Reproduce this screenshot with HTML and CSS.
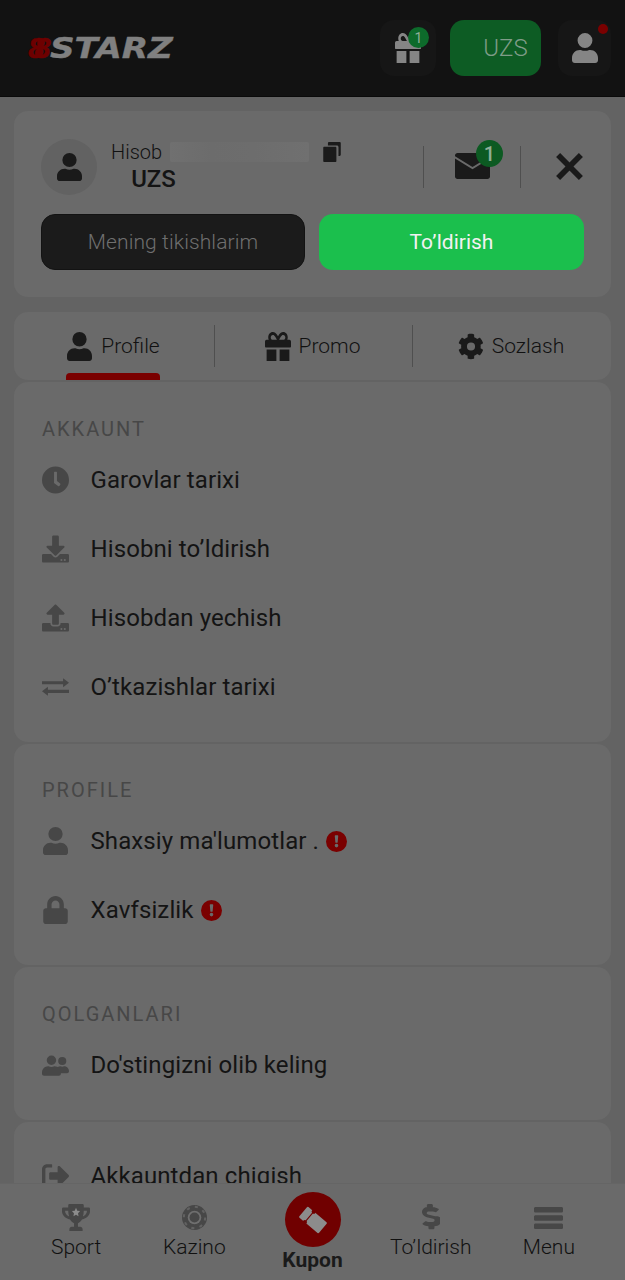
FILE: index.html
```html
<!DOCTYPE html>
<html lang="en">

<head>
    <meta charset="UTF-8" />
    <meta name="viewport" content="width=device-width, initial-scale=1.0" />
    <title>8Starz</title>
    <link rel="stylesheet" href="styles.css">
</head>

<body>
    <svg class="defs">
        <symbol id="i-user" viewBox="0 0 448 512" preserveAspectRatio="none"><path d="M224 256a128 128 0 1 0 0-256 128 128 0 0 0 0 256zm90 32h-17a174 174 0 0 1-146 0h-17C60 288 0 348 0 422v42c0 27 21 48 48 48h352c27 0 48-21 48-48v-42c0-74-60-134-134-134z"/></symbol>
        <symbol id="i-gift" viewBox="0 30 512 482" preserveAspectRatio="none"><path d="M32 512c0 0 14 0 32 0h160V320H32v192zm256 0h160c18 0 32 0 32 0V320H288v192zm192-352h-42c6-12 10-25 10-40 0-48-40-88-88-88-42 0-69 21-104 69-35-48-62-69-104-69-48 0-88 40-88 88 0 15 3 28 10 40H32c-18 0-32 14-32 32v80c0 9 7 16 16 16h480c9 0 16-7 16-16v-80c0-18-14-32-32-32zm-327 0c-22 0-40-18-40-40s18-40 40-40c20 0 35 3 82 80h-82zm207 0h-82c47-77 61-80 82-80 22 0 40 18 40 40s-18 40-40 40z"/></symbol>
        <symbol id="i-cog" viewBox="0 0 512 512"><path d="M487 316l-43-25c4-23 4-47 0-70l43-25c5-3 7-9 5-14-11-36-30-68-55-95-4-4-10-5-15-2l-43 25c-18-15-39-27-61-35V25c0-6-4-11-9-12-37-8-75-8-110 0-5 1-9 6-9 12v50c-22 8-43 20-61 35L86 85c-5-3-11-2-15 2-25 27-44 59-55 95-2 5 0 11 5 14l43 25c-4 23-4 47 0 70l-43 25c-5 3-7 9-5 14 11 36 30 68 55 95 4 4 10 5 15 2l43-25c18 15 39 27 61 35v50c0 6 4 11 9 12 37 8 75 8 110 0 5-1 9-6 9-12v-50c22-8 43-20 61-35l43 25c5 3 11 2 15-2 25-27 44-59 55-95 2-5 0-11-5-14zM256 336a80 80 0 1 1 0-160 80 80 0 0 1 0 160z"/></symbol>
        <symbol id="i-mail" viewBox="0 0 512 400" preserveAspectRatio="none"><path d="M0 38C0 17 17 0 38 0h436c21 0 38 17 38 38v12L256 215 0 50V38zm0 48v276c0 21 17 38 38 38h436c21 0 38-17 38-38V86L256 250 0 86z"/></symbol>
        <symbol id="i-copy" viewBox="0 0 448 512"><path d="M150 0h270c15 0 28 13 28 28v300c0 15-13 28-28 28h-30V130c0-22-18-40-40-40H120V30c0-15 13-30 30-30z"/><path d="M28 120h280c15 0 28 13 28 28v336c0 15-13 28-28 28H28c-15 0-28-13-28-28V148c0-15 13-28 28-28z"/></symbol>
        <symbol id="i-clock" viewBox="0 0 512 512"><path d="M256 0a256 256 0 1 0 0 512 256 256 0 0 0 0-512zm91 344-19 26c-4 6-11 7-17 3l-78-57c-3-2-5-6-5-10V112c0-7 5-12 12-12h32c7 0 12 5 12 12v165l60 45c5 4 7 12 3 17v5z"/></symbol>
        <symbol id="i-down" viewBox="0 0 512 512"><path d="M216 0h80c13 0 24 11 24 24v168h88c18 0 27 21 14 34L269 379c-7 7-19 7-26 0L90 226c-13-13-4-34 14-34h88V24c0-13 11-24 24-24zm296 376v112c0 13-11 24-24 24H24c-13 0-24-11-24-24V376c0-13 11-24 24-24h147l49 49c20 20 52 20 72 0l49-49h147c13 0 24 11 24 24zm-124 88a20 20 0 1 0-40 0 20 20 0 0 0 40 0zm64 0a20 20 0 1 0-40 0 20 20 0 0 0 40 0z"/></symbol>
        <symbol id="i-up" viewBox="0 0 512 512"><path d="M296 384h-80c-13 0-24-11-24-24V192h-88c-18 0-27-21-14-34L243 5c7-7 19-7 26 0l153 153c13 13 4 34-14 34h-88v168c0 13-11 24-24 24zm216-8v112c0 13-11 24-24 24H24c-13 0-24-11-24-24V376c0-13 11-24 24-24h136v8c0 31 25 56 56 56h80c31 0 56-25 56-56v-8h136c13 0 24 11 24 24zm-124 88a20 20 0 1 0-40 0 20 20 0 0 0 40 0zm64 0a20 20 0 1 0-40 0 20 20 0 0 0 40 0z"/></symbol>
        <symbol id="i-swap" viewBox="0 0 512 380"><path d="M0 80h400V24l112 86-112 86v-56H0z"/><path d="M512 242H112v-56L0 272l112 86v-56h400z"/></symbol>
        <symbol id="i-lock" viewBox="0 0 448 512"><path d="M400 224h-24v-72C376 68 308 0 224 0S72 68 72 152v72H48c-26 0-48 22-48 48v192c0 26 22 48 48 48h352c26 0 48-22 48-48V272c0-26-22-48-48-48zm-104 0H152v-72c0-40 32-72 72-72s72 32 72 72v72z"/></symbol>
        <symbol id="i-alert" viewBox="0 0 512 512"><path d="M256 0a256 256 0 1 0 0 512 256 256 0 0 0 0-512zm0 400a44 44 0 1 1 0-88 44 44 0 0 1 0 88zm42-280-14 152c-1 8-7 14-15 14h-26c-8 0-14-6-15-14l-14-152c-1-9 6-16 15-16h54c9 0 16 7 15 16z"/></symbol>
        <symbol id="i-users" viewBox="0 0 640 512"><path d="M224 256a112 112 0 1 0 0-224 112 112 0 0 0 0 224zm77 32h-9a157 157 0 0 1-136 0h-9C66 288 0 354 0 435v29c0 26 22 48 48 48h352c26 0 48-22 48-48v-29c0-81-66-147-147-147zm179-32a96 96 0 1 0 0-192 96 96 0 0 0 0 192zm48 32h-4a126 126 0 0 1-88 0h-4c-20 0-39 6-56 16 25 27 40 62 40 101v38c0 2 0 5-1 7h177c26 0 48-22 48-48 0-62-50-114-112-114z"/></symbol>
        <symbol id="i-exit" viewBox="0 0 512 448"><path d="M505 207 337 39c-15-15-41-4-41 17v96H160c-13 0-24 11-24 24v96c0 13 11 24 24 24h136v96c0 21 26 32 41 17l168-168c9-9 9-25 0-34zM192 436v-40c0-7-5-12-12-12H96c-18 0-32-14-32-32V96c0-18 14-32 32-32h84c7 0 12-5 12-12V12c0-7-5-12-12-12H96C43 0 0 43 0 96v256c0 53 43 96 96 96h84c7 0 12-5 12-12z"/></symbol>
        <symbol id="i-trophy" viewBox="0 0 576 512" preserveAspectRatio="none"><path d="M552 64H448V24c0-13-11-24-24-24H152c-13 0-24 11-24 24v40H24C11 64 0 75 0 88v56c0 66 70 134 166 151 25 40 60 62 82 69v68h-48c-27 0-48 21-48 48v32h272v-32c0-27-21-48-48-48h-48v-68c22-7 57-29 82-69 96-17 166-85 166-151V88c0-13-11-24-24-24zM64 144v-16h64c1 43 8 79 19 110-50-18-83-62-83-94zm448 0c0 32-33 76-83 94 11-31 18-67 19-110h64v16z"/><path fill="#8c8c8c" d="m288 72 26 54 58 8-42 41 10 58-52-27-52 27 10-58-42-41 58-8z"/></symbol>
        <symbol id="i-chip" viewBox="0 0 48 48">
            <circle cx="24" cy="24" r="24"/>
            <circle cx="24" cy="24" r="20.5" fill="none" stroke="#626262" stroke-width="4" stroke-dasharray="6 10.1"/>
            <circle cx="24" cy="24" r="13" fill="#6f6f6f"/>
            <circle cx="24" cy="24" r="9.5"/>
        </symbol>
        <symbol id="i-dollar" viewBox="0 0 288 512" preserveAspectRatio="none"><path d="M209 233 97 200c-13-4-22-16-22-29 0-17 14-30 30-30h69c13 0 25 4 35 11 6 4 14 3 19-2l36-35c7-7 6-18-2-24-25-19-56-30-88-30V24c0-13-11-24-24-24h-48c-13 0-24 11-24 24v37h-4C37 61-8 109 1 166c6 41 37 73 76 85l103 30c13 4 22 16 22 29 0 17-14 30-30 30h-69c-13 0-25-4-35-11-6-4-14-3-19 2l-36 35c-7 7-6 18 2 24 25 19 56 30 88 30v37c0 13 11 24 24 24h48c13 0 24-11 24-24v-37c47-1 91-29 106-74 21-64-17-127-96-113z"/></symbol>
        <symbol id="i-bars" viewBox="0 0 448 400" preserveAspectRatio="none"><path d="M24 0h400c13 0 24 11 24 24v52c0 13-11 24-24 24H24C11 100 0 89 0 76V24C0 11 11 0 24 0zm0 150h400c13 0 24 11 24 24v52c0 13-11 24-24 24H24c-13 0-24-11-24-24v-52c0-13 11-24 24-24zm0 150h400c13 0 24 11 24 24v52c0 13-11 24-24 24H24c-13 0-24-11-24-24v-52c0-13 11-24 24-24z"/></symbol>
    </svg>

    <header class="topbar">
        <div class="logo"><span class="logo-num">88</span>STARZ</div>
        <div class="top-actions">
            <button class="top-btn">
                <svg class="top-icon"><use href="#i-gift"/></svg>
                <span class="count top-count">1</span>
            </button>
            <button class="top-balance">UZS</button>
            <button class="top-btn top-user">
                <svg class="top-icon"><use href="#i-user"/></svg>
                <span class="dot"></span>
            </button>
        </div>
    </header>

    <main class="content">
        <section class="card account">
            <div class="account-row">
                <div class="avatar"><svg class="avatar-icon"><use href="#i-user"/></svg></div>
                <div class="account-info">
                    <div class="account-line">
                        <span class="account-label">Hisob</span>
                        <span class="account-hidden"></span>
                        <svg class="copy-icon"><use href="#i-copy"/></svg>
                    </div>
                    <div class="account-currency">UZS</div>
                </div>
                <div class="account-tools">
                    <div class="mail">
                        <svg class="mail-icon"><use href="#i-mail"/></svg>
                        <span class="count mail-count">1</span>
                    </div>
                    <div class="close">
                        <svg class="close-icon" viewBox="0 0 28 28"><path d="M3 3l22 22M25 3L3 25"/></svg>
                    </div>
                </div>
            </div>
            <div class="account-buttons">
                <button class="btn btn-dark">Mening tikishlarim</button>
                <button class="btn btn-green">To’ldirish</button>
            </div>
        </section>

        <nav class="card tabs">
            <div class="tab active"><svg class="tab-icon"><use href="#i-user"/></svg>Profile</div>
            <div class="tab"><svg class="tab-icon"><use href="#i-gift"/></svg>Promo</div>
            <div class="tab"><svg class="tab-icon"><use href="#i-cog"/></svg>Sozlash</div>
        </nav>

        <section class="card menu">
            <h2 class="menu-title">AKKAUNT</h2>
            <a class="menu-row"><svg class="menu-icon"><use href="#i-clock"/></svg>Garovlar tarixi</a>
            <a class="menu-row"><svg class="menu-icon"><use href="#i-down"/></svg>Hisobni to’ldirish</a>
            <a class="menu-row"><svg class="menu-icon"><use href="#i-up"/></svg>Hisobdan yechish</a>
            <a class="menu-row"><svg class="menu-icon"><use href="#i-swap"/></svg>O’tkazishlar tarixi</a>
        </section>

        <section class="card menu">
            <h2 class="menu-title">PROFILE</h2>
            <a class="menu-row"><svg class="menu-icon menu-icon-user"><use href="#i-user"/></svg>Shaxsiy ma'lumotlar .<svg class="alert-icon"><use href="#i-alert"/></svg></a>
            <a class="menu-row"><svg class="menu-icon"><use href="#i-lock"/></svg>Xavfsizlik<svg class="alert-icon"><use href="#i-alert"/></svg></a>
        </section>

        <section class="card menu">
            <h2 class="menu-title">QOLGANLARI</h2>
            <a class="menu-row"><svg class="menu-icon"><use href="#i-users"/></svg>Do'stingizni olib keling</a>
        </section>

        <section class="card menu menu-last">
            <a class="menu-row"><svg class="menu-icon"><use href="#i-exit"/></svg>Akkauntdan chiqish</a>
        </section>
    </main>

    <footer class="bottombar">
        <div class="nav-item"><svg class="nav-icon nav-trophy"><use href="#i-trophy"/></svg>Sport</div>
        <div class="nav-item"><svg class="nav-icon nav-chip"><use href="#i-chip"/></svg>Kazino</div>
        <div class="nav-item nav-kupon">
            <span class="kupon-circle">
                <svg class="kupon-icon" viewBox="0 0 28 28">
                    <g transform="rotate(40 14 14)">
                        <rect x="2" y="7.5" width="7" height="13" rx="1"/>
                        <rect x="10" y="7.5" width="16" height="13" rx="1"/>
                        <circle cx="9.5" cy="7.5" r="2" class="kupon-notch"/>
                        <circle cx="9.5" cy="20.5" r="2" class="kupon-notch"/>
                    </g>
                </svg>
            </span>
            Kupon
        </div>
        <div class="nav-item"><svg class="nav-icon nav-dollar"><use href="#i-dollar"/></svg>To’ldirish</div>
        <div class="nav-item"><svg class="nav-icon nav-bars"><use href="#i-bars"/></svg>Menu</div>
    </footer>
</body>

</html>
```

FILE: styles.css
```css
* {
    box-sizing: border-box;
}

html,
body {
    margin: 0;
    height: 1280px;
    overflow: hidden;
}

body {
    background-color: #636363;
    color: #141414;
    font-family: Roboto, sans-serif;
}

button {
    border: none;
    font-family: inherit;
}

.defs {
    display: none;
}

.topbar {
    display: flex;
    align-items: center;
    justify-content: space-between;
    height: 97px;
    padding: 0 14px 0 28px;
    background-color: #121212;
    border-bottom: 1px solid #0a0a0a;
}

.logo {
    font-family: "DejaVu Sans", sans-serif;
    font-size: 29px;
    font-weight: 700;
    font-style: italic;
    color: #808080;
    -webkit-text-stroke: 0.4px #808080;
    transform: scaleX(1.18);
    transform-origin: left center;
}

.logo-num {
    display: inline-block;
    margin-right: 5px;
    font-size: 27px;
    letter-spacing: -12px;
    color: #6e0000;
    -webkit-text-stroke: 0.4px #6e0000;
    transform: scaleX(0.78);
    transform-origin: left center;
}

.top-actions {
    display: flex;
    align-items: center;
}

.top-btn {
    position: relative;
    display: flex;
    align-items: center;
    justify-content: center;
    width: 56px;
    height: 56px;
    border-radius: 14px;
    background-color: #161616;
}

.top-user {
    width: 53px;
    margin-left: 17px;
}

.top-icon {
    width: 26px;
    height: 30px;
    fill: #858585;
}

.top-balance {
    width: 91px;
    height: 56px;
    margin-left: 14px;
    padding-left: 26px;
    border-radius: 14px;
    background-color: #0d5c24;
    color: #7f9c88;
    font-size: 24px;
    font-weight: 300;
}

.count {
    position: absolute;
    display: flex;
    align-items: center;
    justify-content: center;
    border-radius: 50%;
    background-color: #0d6b2b;
    color: #8fae98;
}

.top-count {
    top: 7px;
    right: 7px;
    width: 21px;
    height: 21px;
    font-size: 14px;
}

.dot {
    position: absolute;
    top: 4px;
    right: 3px;
    width: 10px;
    height: 10px;
    border-radius: 50%;
    background-color: #7a0000;
}

.content {
    display: flex;
    flex-direction: column;
    padding: 14px 14px 0;
}

.card {
    background-color: #6a6a6a;
    border-radius: 14px;
}

.account {
    height: 186px;
    padding: 28px 27px 0;
}

.account-row {
    display: flex;
    align-items: center;
    height: 56px;
}

.avatar {
    display: flex;
    align-items: center;
    justify-content: center;
    width: 56px;
    height: 56px;
    border-radius: 50%;
    background-color: #626262;
}

.avatar-icon {
    width: 25px;
    height: 28px;
    fill: #1a1a1a;
}

.account-info {
    flex: 1;
    margin-left: 14px;
    margin-top: -2px;
}

.account-line {
    display: flex;
    align-items: center;
    height: 26px;
    font-size: 20px;
    font-weight: 300;
    color: #111;
}

.account-label {
    width: 59px;
}

.account-hidden {
    width: 139px;
    height: 20px;
    border-radius: 2px;
    background: linear-gradient(90deg, #707070, #6c6c6c 30%, #6d6d6d 60%, #707070);
}

.copy-icon {
    width: 20px;
    height: 20px;
    margin-left: 13px;
    fill: #1a1a1a;
}

.account-currency {
    width: 85px;
    font-size: 24px;
    font-weight: 500;
    text-align: center;
}

.account-tools {
    display: flex;
    align-items: center;
    height: 42px;
}

.mail {
    position: relative;
    display: flex;
    align-items: center;
    justify-content: center;
    width: 98px;
    height: 42px;
    border-left: 1px solid #4f4f4f;
    border-right: 1px solid #4f4f4f;
}

.mail-icon {
    width: 35px;
    height: 26px;
    margin-bottom: 2px;
    fill: #1a1a1a;
}

.mail-count {
    top: -6px;
    right: 17px;
    width: 27px;
    height: 27px;
    font-size: 20px;
    font-weight: 500;
    background-color: #0c5a22;
    color: #8fae98;
}

.close {
    display: flex;
    justify-content: flex-end;
    width: 63px;
    margin-bottom: 2px;
}

.close-icon {
    width: 29px;
    height: 29px;
    fill: none;
    stroke: #1a1a1a;
    stroke-width: 5.5;
}

.account-buttons {
    display: flex;
    gap: 14px;
    margin-top: 19px;
}

.btn {
    height: 56px;
    border-radius: 14px;
    font-size: 21px;
    font-weight: 300;
}

.btn-dark {
    width: 264px;
    background-color: #1b1b1b;
    border: 1px solid #131313;
    color: #6f6f6f;
    letter-spacing: 0.1px;
}

.btn-green {
    width: 265px;
    background-color: #1bbf4d;
    color: #f2f2f2;
    font-weight: 400;
}

.tabs {
    display: flex;
    align-items: center;
    height: 68px;
    margin-top: 15px;
    padding: 0 0 0 3px;
}

.tab {
    position: relative;
    flex: 0 0 198px;
    display: flex;
    align-items: center;
    justify-content: center;
    gap: 8px;
    height: 42px;
    padding-right: 2px;
    font-size: 21px;
    font-weight: 300;
    color: #111;
    border-right: 1px solid #4f4f4f;
}

.tab.active {
    gap: 9px;
    padding-right: 4px;
}

.tab:last-child {
    border-right: none;
}

.tab-icon {
    width: 26px;
    height: 29px;
    fill: #1a1a1a;
}

.tab.active .tab-icon {
    width: 25px;
}

.tab.active::after {
    content: "";
    position: absolute;
    left: 49px;
    bottom: -13px;
    width: 94px;
    height: 7px;
    border-radius: 4px 4px 0 0;
    background-color: #7a0000;
}

.menu {
    margin-top: 2px;
    padding: 34.5px 28px 20.5px;
}

.menu-title {
    height: 24px;
    margin: 0 0 4.5px;
    font-size: 20px;
    font-weight: 400;
    line-height: 24px;
    letter-spacing: 2px;
    color: #474747;
}

.menu-row {
    display: flex;
    align-items: center;
    height: 69px;
    font-size: 24px;
    letter-spacing: 0.1px;
}

.menu-icon {
    flex: none;
    width: 27px;
    height: 28px;
    margin-right: 21.5px;
    fill: #474747;
}

.menu-icon-user {
    width: 25px;
    margin-left: 1px;
    margin-right: 22.5px;
}

.alert-icon {
    width: 21px;
    height: 21px;
    margin-left: 7px;
    fill: #7a0000;
}

.menu-last {
    height: 140px;
    padding-top: 20px;
}

.bottombar {
    position: fixed;
    left: 0;
    right: 0;
    bottom: 0;
    display: flex;
    height: 97px;
    padding: 0 17px;
    background-color: #6a6a6a;
    border-top: 1px solid #656565;
}

.nav-item {
    flex: 1;
    display: flex;
    flex-direction: column;
    align-items: center;
    padding-top: 20px;
    font-size: 21px;
    font-weight: 300;
    color: #111;
}

.nav-icon {
    fill: #474747;
}

.nav-trophy {
    width: 28px;
    height: 27px;
    margin-bottom: 4px;
}

.nav-chip {
    width: 25px;
    height: 25px;
    margin: 1px 0 5px;
}

.nav-dollar {
    width: 18px;
    height: 27px;
    margin-bottom: 4px;
}

.nav-bars {
    width: 29px;
    height: 22px;
    margin: 3px 0 6px;
}

.nav-kupon {
    padding-top: 8px;
    font-weight: 700;
    color: #1a1a1a;
}

.kupon-circle {
    display: flex;
    align-items: center;
    justify-content: center;
    width: 56px;
    height: 55px;
    margin-bottom: 1px;
    border-radius: 50%;
    background-color: #700000;
}

.kupon-icon {
    width: 30px;
    height: 30px;
    fill: #8c8c8c;
}

.kupon-notch {
    fill: #700000;
}
```
